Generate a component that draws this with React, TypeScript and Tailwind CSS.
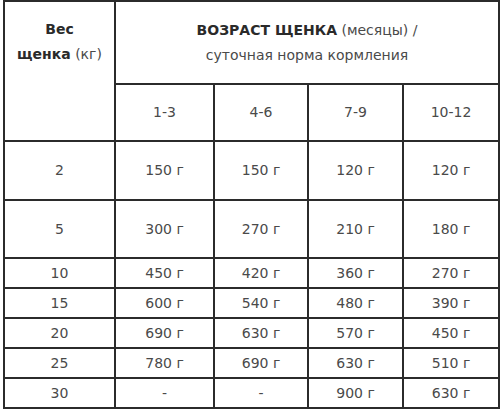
export default function App() {
  const ages = ["1-3", "4-6", "7-9", "10-12"]
  const rows: { w: string; v: string[]; h: string }[] = [
    { w: "2", v: ["150 г", "150 г", "120 г", "120 г"], h: "h-[59px]" },
    { w: "5", v: ["300 г", "270 г", "210 г", "180 г"], h: "h-[58px]" },
    { w: "10", v: ["450 г", "420 г", "360 г", "270 г"], h: "h-[30px]" },
    { w: "15", v: ["600 г", "540 г", "480 г", "390 г"], h: "h-[30px]" },
    { w: "20", v: ["690 г", "630 г", "570 г", "450 г"], h: "h-[30px]" },
    { w: "25", v: ["780 г", "690 г", "630 г", "510 г"], h: "h-[30px]" },
    { w: "30", v: ["-", "-", "900 г", "630 г"], h: "h-[30px]" },
  ]

  const cell = "border-2 border-[#2b2b2b] text-center align-middle p-0"

  return (
    <div className="w-[500px] h-[409px] bg-white pl-[3px] font-['DejaVu_Sans',Verdana,sans-serif] text-[14px] text-[#4a4a4a]">
      <table className="table-fixed border-collapse w-[495px]">
        <colgroup>
          <col className="w-[111px]" />
          <col className="w-[99px]" />
          <col className="w-[94px]" />
          <col className="w-[95px]" />
          <col className="w-[96px]" />
        </colgroup>
        <tbody>
          <tr className="h-[83px]">
            <td rowSpan={2} className={`${cell} align-top pt-[15px] leading-[25px]`}>
              <div className="font-bold text-[#2a2a2a]">Вес</div>
              <div>
                <span className="font-bold text-[#2a2a2a]">щенка</span> (кг)
              </div>
            </td>
            <td colSpan={4} className={`${cell} leading-[25px]`}>
              <div>
                <span className="font-bold text-[#2a2a2a]">ВОЗРАСТ ЩЕНКА</span> (месяцы) /
              </div>
              <div>суточная норма кормления</div>
            </td>
          </tr>
          <tr className="h-[57px]">
            {ages.map((a) => (
              <td key={a} className={cell}>
                {a}
              </td>
            ))}
          </tr>
          {rows.map((r) => (
            <tr key={r.w} className={r.h}>
              <td className={cell}>{r.w}</td>
              {r.v.map((v, i) => (
                <td key={i} className={cell}>
                  {v}
                </td>
              ))}
            </tr>
          ))}
        </tbody>
      </table>
    </div>
  )
}
